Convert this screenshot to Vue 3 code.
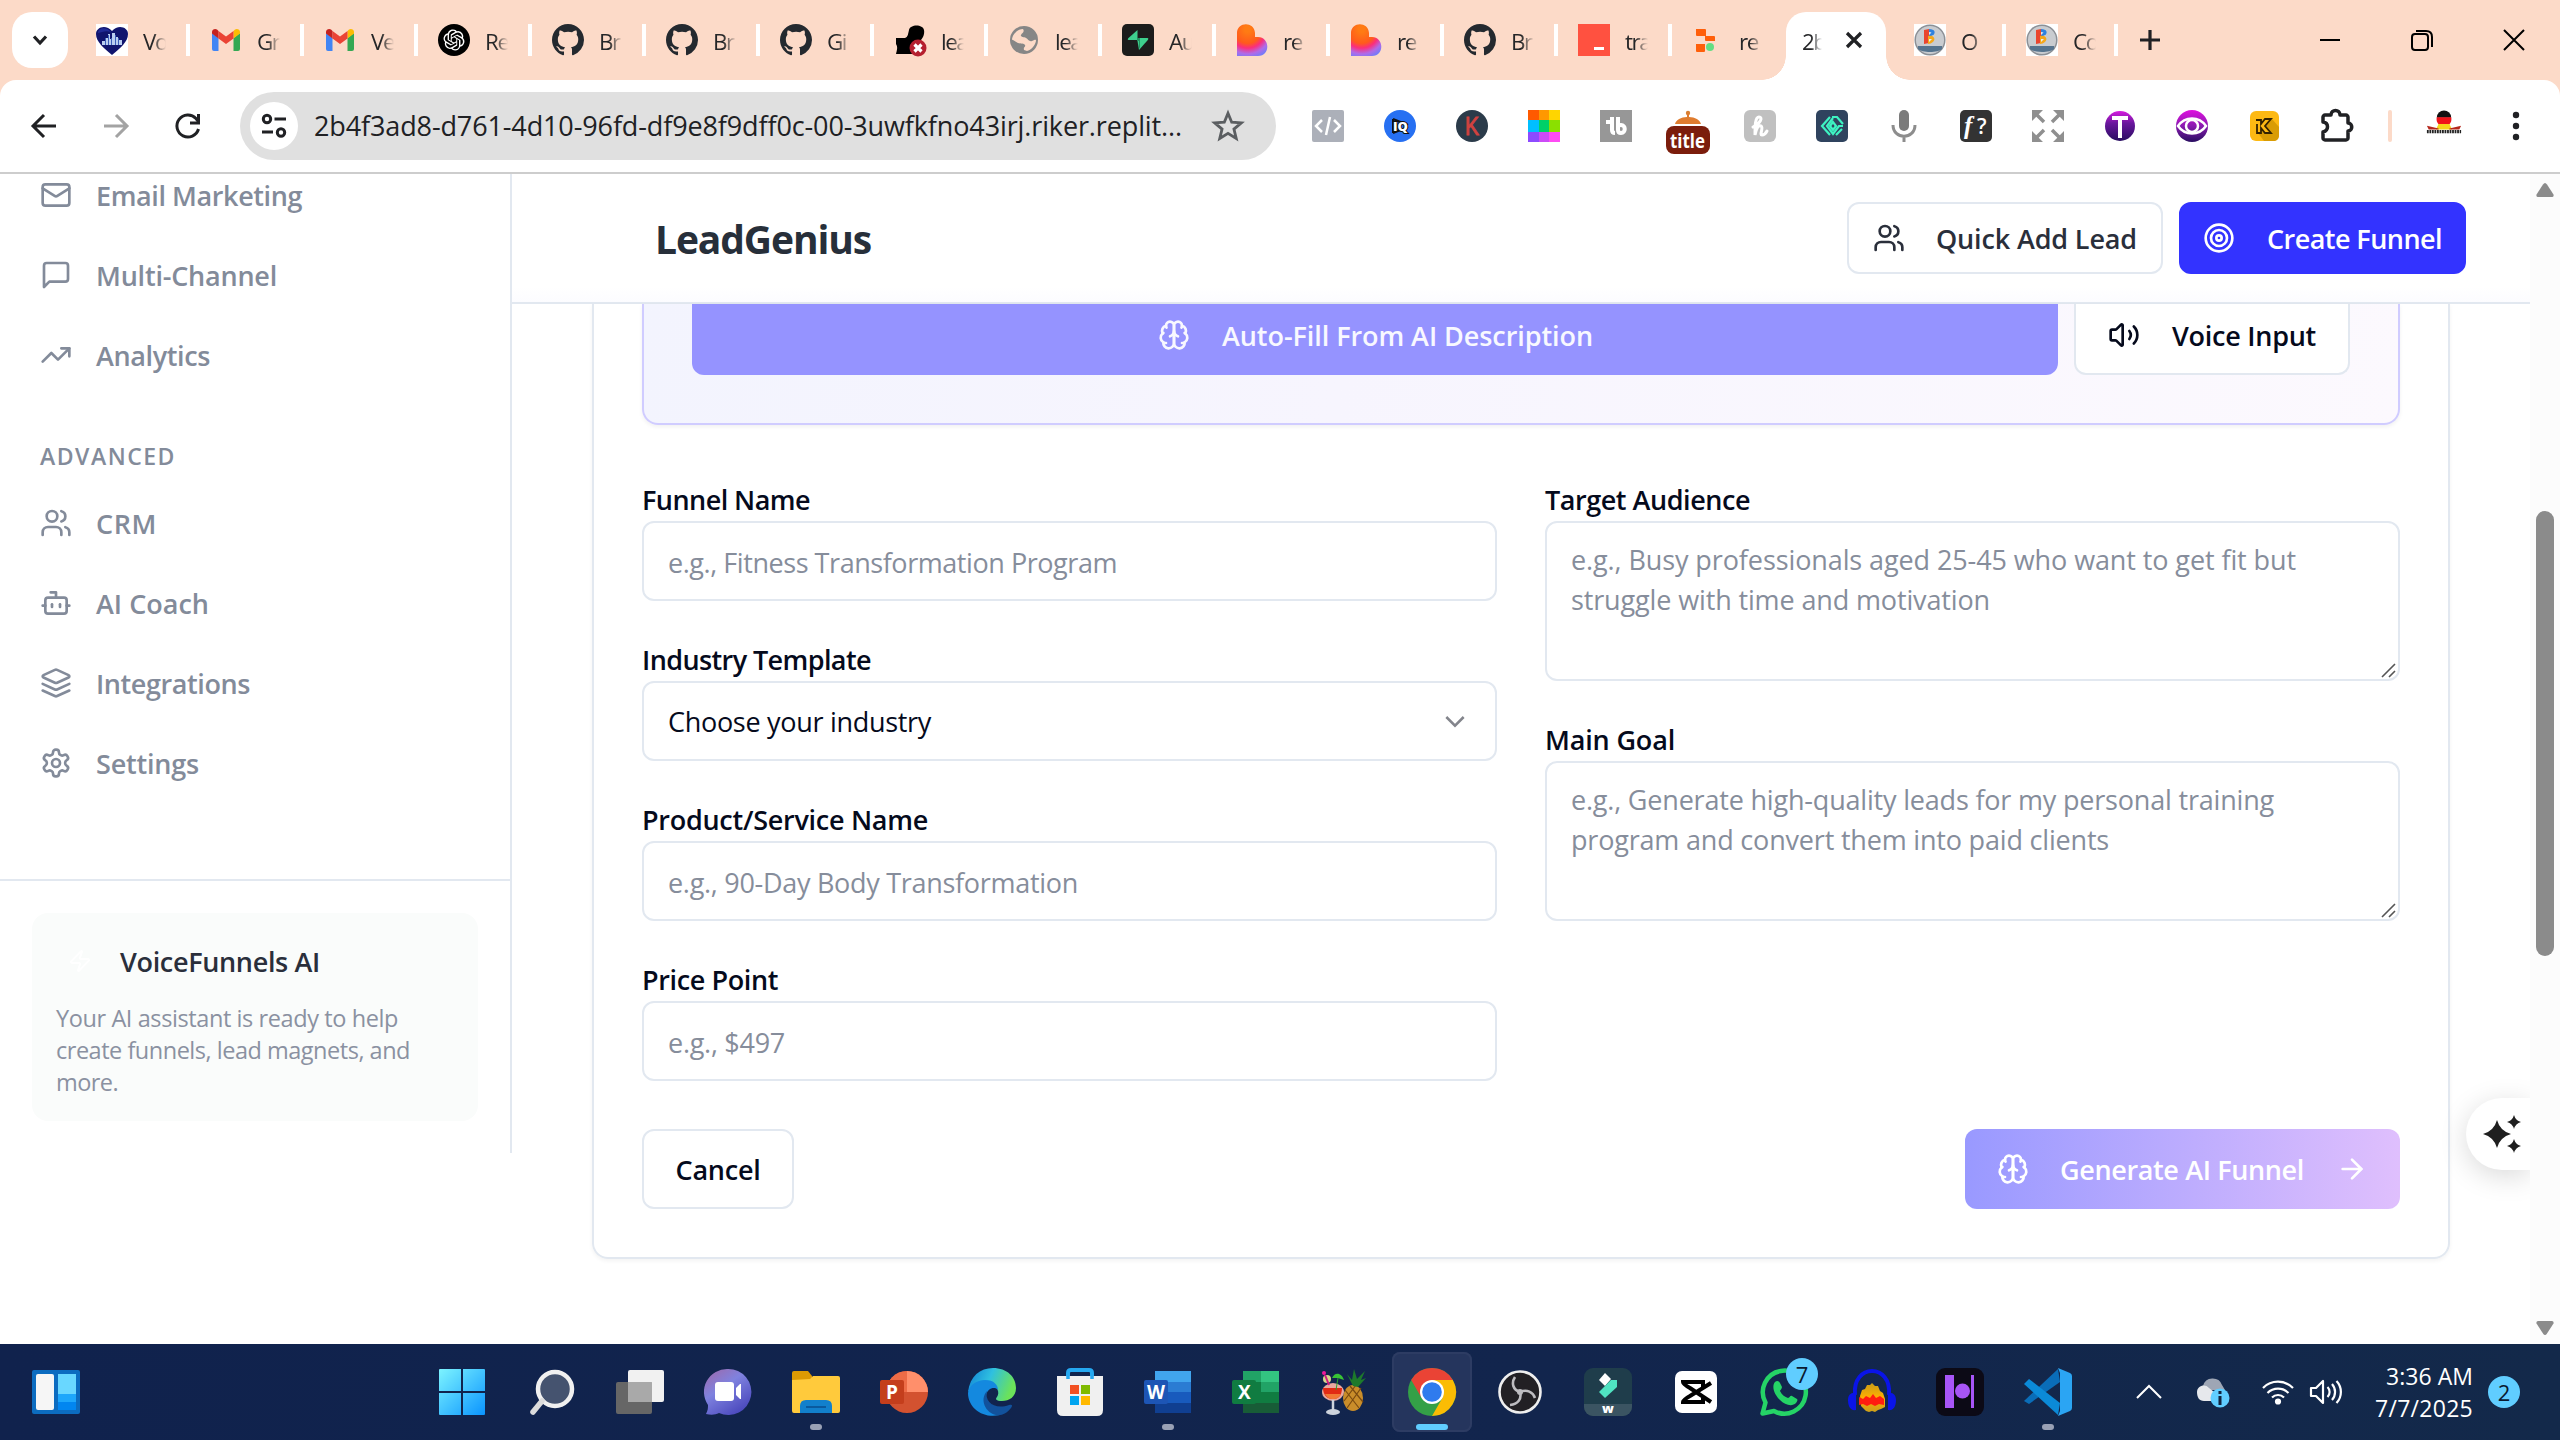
<script setup>
// Tunes letter-spacing so a single-line label takes the given width in pixels.
const vFit = {
  mounted(el, { value }) {
    const range = document.createRange()
    range.selectNodeContents(el)
    const w = range.getBoundingClientRect().width
    const n = el.textContent.trim().length
    if (n > 1) el.style.letterSpacing = ((value - w) / n).toFixed(3) + 'px'
  }
}

const lucide = {
  mail: ['M4 4h16a2 2 0 0 1 2 2v12a2 2 0 0 1-2 2H4a2 2 0 0 1-2-2V6a2 2 0 0 1 2-2z', 'm22 7-8.97 5.7a1.94 1.94 0 0 1-2.06 0L2 7'],
  message: ['M21 15a2 2 0 0 1-2 2H7l-4 4V5a2 2 0 0 1 2-2h14a2 2 0 0 1 2 2z'],
  trend: ['M22 7l-8.5 8.5-5-5L2 17', 'M16 7h6v6'],
  users: ['M16 21v-2a4 4 0 0 0-4-4H6a4 4 0 0 0-4 4v2', 'M5 7a4 4 0 1 0 8 0a4 4 0 1 0-8 0', 'M22 21v-2a4 4 0 0 0-3-3.87', 'M16 3.13a4 4 0 0 1 0 7.75'],
  bot: ['M12 8V4H8', 'M6 8h12a2 2 0 0 1 2 2v8a2 2 0 0 1-2 2H6a2 2 0 0 1-2-2v-8a2 2 0 0 1 2-2z', 'M2 14h2', 'M20 14h2', 'M15 13v2', 'M9 13v2'],
  layers: ['m12.83 2.18a2 2 0 0 0-1.66 0L2.6 6.08a1 1 0 0 0 0 1.83l8.58 3.91a2 2 0 0 0 1.66 0l8.58-3.9a1 1 0 0 0 0-1.83Z', 'm22 17.65-9.17 4.16a2 2 0 0 1-1.66 0L2 17.65', 'm22 12.65-9.17 4.16a2 2 0 0 1-1.66 0L2 12.65'],
  settings: ['M12.22 2h-.44a2 2 0 0 0-2 2v.18a2 2 0 0 1-1 1.73l-.43.25a2 2 0 0 1-2 0l-.15-.08a2 2 0 0 0-2.73.73l-.22.38a2 2 0 0 0 .73 2.73l.15.1a2 2 0 0 1 1 1.72v.51a2 2 0 0 1-1 1.74l-.15.09a2 2 0 0 0-.73 2.73l.22.38a2 2 0 0 0 2.73.73l.15-.08a2 2 0 0 1 2 0l.43.25a2 2 0 0 1 1 1.73V20a2 2 0 0 0 2 2h.44a2 2 0 0 0 2-2v-.18a2 2 0 0 1 1-1.73l.43-.25a2 2 0 0 1 2 0l.15.08a2 2 0 0 0 2.73-.73l.22-.39a2 2 0 0 0-.73-2.73l-.15-.08a2 2 0 0 1-1-1.74v-.5a2 2 0 0 1 1-1.74l.15-.09a2 2 0 0 0 .73-2.73l-.22-.38a2 2 0 0 0-2.73-.73l-.15.08a2 2 0 0 1-2 0l-.43-.25a2 2 0 0 1-1-1.73V4a2 2 0 0 0-2-2z', 'M9 12a3 3 0 1 0 6 0a3 3 0 1 0-6 0'],
  brain: ['M12 5a3 3 0 1 0-5.997.125 4 4 0 0 0-2.526 5.77 4 4 0 0 0 .556 6.588A4 4 0 1 0 12 18Z', 'M12 5a3 3 0 1 1 5.997.125 4 4 0 0 1 2.526 5.77 4 4 0 0 1-.556 6.588A4 4 0 1 1 12 18Z', 'M15 13a4.5 4.5 0 0 1-3-4 4.5 4.5 0 0 1-3 4', 'M17.599 6.5a3 3 0 0 0 .399-1.375', 'M6.003 5.125A3 3 0 0 0 6.401 6.5', 'M3.477 10.896a4 4 0 0 1 .585-.396', 'M19.938 10.5a4 4 0 0 1 .585.396', 'M6 18a4 4 0 0 1-1.967-.516', 'M19.967 17.484A4 4 0 0 1 18 18'],
  volume: ['M11 4.702a.705.705 0 0 0-1.203-.498L6.413 7.587A1.4 1.4 0 0 1 5.416 8H3a1 1 0 0 0-1 1v6a1 1 0 0 0 1 1h2.416a1.4 1.4 0 0 1 .997.413l3.383 3.384A.705.705 0 0 0 11 19.298z', 'M16 9a5 5 0 0 1 0 6', 'M19.364 18.364a9 9 0 0 0 0-12.728'],
  target: ['M2 12a10 10 0 1 0 20 0a10 10 0 1 0-20 0', 'M6 12a6 6 0 1 0 12 0a6 6 0 1 0-12 0', 'M10 12a2 2 0 1 0 4 0a2 2 0 1 0-4 0'],
  arrow: ['M5 12h14', 'm12 5 7 7-7 7'],
  zap: ['M4 14a1 1 0 0 1-.78-1.63l9.9-10.2a.5.5 0 0 1 .86.46l-1.92 6.02A1 1 0 0 0 13 10h7a1 1 0 0 1 .78 1.63l-9.9 10.2a.5.5 0 0 1-.86-.46l1.92-6.02A1 1 0 0 0 11 14z']
}

const gh = '<path transform="scale(2)" fill="#24292f" d="M8 0C3.58 0 0 3.58 0 8c0 3.54 2.29 6.53 5.47 7.59.4.07.55-.17.55-.38 0-.19-.01-.82-.01-1.49-2.01.37-2.53-.49-2.69-.94-.09-.23-.48-.94-.82-1.13-.28-.15-.68-.52-.01-.53.63-.01 1.08.58 1.23.82.72 1.21 1.87.87 2.33.66.07-.52.28-.87.51-1.07-1.78-.2-3.64-.89-3.64-3.95 0-.87.31-1.59.82-2.15-.08-.2-.36-1.02.08-2.12 0 0 .67-.21 2.2.82.64-.18 1.32-.27 2-.27s1.36.09 2 .27c1.53-1.04 2.2-.82 2.2-.82.44 1.1.16 1.92.08 2.12.51.56.82 1.27.82 2.15 0 3.07-1.87 3.75-3.65 3.95.29.25.54.73.54 1.48 0 1.07-.01 1.93-.01 2.2 0 .21.15.46.55.38A8.01 8.01 0 0 0 16 8c0-4.42-3.58-8-8-8z"/>'
const ui = 'font-family="Open Sans,Noto Sans,sans-serif"'

// 32 x 32 artwork: tab favicons and toolbar extensions
const art = {
  heart: '<path fill="#fff" d="M0 0h32v32H0z"/><path fill="#10146e" d="M16 31C8 24 0 18 0 10 0 3 10 0 16 7c6-7 16-4 16 3 0 8-8 14-16 21z"/><path fill="#2b39b0" opacity=".6" d="M2 9c0-5 8-7 13-1-5-2-9 0-13 1z"/><path fill="#b9cdf0" d="M6 17h3v-3h3v-4h2v5h2V9h3v4h3v3h4v5H6z"/><path stroke="#3a5cb8" d="M9.500 14v7M12.500 11v10M15.500 14v7M19.500 11v10M22.500 14v7"/>',
  gmail: '<path fill="#4285f4" d="M4 27h4.500V14L2 9v16a2 2 0 0 0 2 2z"/><path fill="#34a853" d="M23.500 27H28a2 2 0 0 0 2-2V9l-6.500 5z"/><path fill="#fbbc04" d="M23.500 7v7.500L30 9.500V8c0-2.600-3-4-5-2.500z"/><path fill="#ea4335" d="M8.500 14.500V7l7.500 5.600L23.500 7v7.500L16 20z"/><path fill="#c5221f" d="M2 8v1.500l6.500 5V7L7 5.500C5 4 2 5.400 2 8z"/>',
  openai: '<circle cx="16" cy="16" r="16"/><path fill="#fff" transform="translate(5.500 5.500) scale(.875)" d="M22.2819 9.8211a5.9847 5.9847 0 0 0-.5157-4.9108 6.0462 6.0462 0 0 0-6.5098-2.9A6.0651 6.0651 0 0 0 4.9807 4.1818a5.9847 5.9847 0 0 0-3.9977 2.9 6.0462 6.0462 0 0 0 .7427 7.0966 5.98 5.98 0 0 0 .511 4.9107 6.051 6.051 0 0 0 6.5146 2.9001A5.9847 5.9847 0 0 0 13.2599 24a6.0557 6.0557 0 0 0 5.7718-4.2058 5.9894 5.9894 0 0 0 3.9977-2.9001 6.0557 6.0557 0 0 0-.7475-7.0729zm-9.022 12.6081a4.4755 4.4755 0 0 1-2.8764-1.0408l.1419-.0804 4.7783-2.7582a.7948.7948 0 0 0 .3927-.6813v-6.7369l2.02 1.1686a.071.071 0 0 1 .038.052v5.5826a4.504 4.504 0 0 1-4.4945 4.4944zm-9.6607-4.1254a4.4708 4.4708 0 0 1-.5346-3.0137l.142.0852 4.783 2.7582a.7712.7712 0 0 0 .7806 0l5.8428-3.3685v2.3324a.0804.0804 0 0 1-.0332.0615L9.74 19.9502a4.4992 4.4992 0 0 1-6.1408-1.6464zM2.3408 7.8956a4.485 4.485 0 0 1 2.3655-1.9728V11.6a.7664.7664 0 0 0 .3879.6765l5.8144 3.3543-2.0201 1.1685a.0757.0757 0 0 1-.071 0l-4.8303-2.7865A4.504 4.504 0 0 1 2.3408 7.872zm16.5963 3.8558L13.1038 8.364 15.1192 7.2a.0757.0757 0 0 1 .071 0l4.8303 2.7913a4.4944 4.4944 0 0 1-.6765 8.1042v-5.6772a.79.79 0 0 0-.407-.667zm2.0107-3.0231l-.142-.0852-4.7735-2.7818a.7759.7759 0 0 0-.7854 0L9.409 9.2297V6.8974a.0662.0662 0 0 1 .0284-.0615l4.8303-2.7866a4.4992 4.4992 0 0 1 6.6802 4.66zM8.3065 12.863l-2.02-1.1638a.0804.0804 0 0 1-.038-.0567V6.0742a4.4992 4.4992 0 0 1 7.3757-3.4537l-.142.0805L8.704 5.459a.7948.7948 0 0 0-.3927.6813zm1.0976-2.3654l2.602-1.4998 2.6069 1.4998v2.9994l-2.5974 1.4997-2.6067-1.4997Z"/>',
  github: gh,
  fox: '<path d="M2 14h9c3-1 3-4 4-8 1-6 14-6 15 0 1 5-2 9-4 11l-8 13H2c1-4 2-7 0-10z"/><circle cx="24" cy="24" r="8.500" fill="#b51f2f"/><path stroke="#fff" stroke-width="3.200" d="m20.500 20.500 7 7m0-7-7 7"/>',
  globe: '<circle cx="16" cy="16" r="14" fill="#868686"/><path fill="#fcdac8" d="M15 5c2 3-1 4-2 6s3 2 5 3 3 4 6 3 4-2 4 0c-1 5-5 9-9 10l-3-1c-1-3 2-3 1-5s-4-1-7-2-5-4-6-3c0-5 5-11 11-11z"/><path fill="#868686" d="M17 4c4 1 8 4 9 9-3 1-4-2-6-2s-4-1-3-3 1-2 0-4z"/>',
  supabase: '<rect width="32" height="32" rx="5" fill="#1c1c1c"/><path fill="#3ecf8e" d="M15.500 6v10H6.500c-1 0-1-1 0-2z"/><path fill="#3ecf8e" d="M15 14h10.500c1 0 1 1.200.3 2L17 26z"/><path fill="#249361" d="M15 14h3v9l-1 2v-8h-2z"/>',
  lovable: '<defs><radialGradient id="lv" cx=".35" cy=".15" r="1"><stop offset=".1" stop-color="#ff7b13"/><stop offset=".45" stop-color="#ff5a1c"/><stop offset=".6" stop-color="#fb2e7c"/><stop offset=".78" stop-color="#b06ae8"/><stop offset="1" stop-color="#5b82ff"/></radialGradient></defs><path fill="url(#lv)" d="M1 9c0-11 17-12 18 0v4h3c12 0 13 19 0 19H1z"/>',
  red: '<path fill="#ff5140" d="M0 0h32v32H0z"/><path fill="#fff" d="M16 23h10v3H16z"/>',
  replit: '<path fill="#ff5f0a" d="M4 5h9a1 1 0 0 1 1 1v6H5a1 1 0 0 1-1-1zM13 12h9a1 1 0 0 1 1 1v4h-9a1 1 0 0 1-1-1zM4 20h9v7a1 1 0 0 1-1 1H5a1 1 0 0 1-1-1z"/><circle cx="18" cy="23" r="4" fill="#63dd83"/>',
  badge: '<path fill="#fff" d="M0 0h32v32H0z"/><circle cx="16" cy="16" r="14.800" fill="#c9ccd0" stroke="#8c9096" stroke-width="1.500"/><path fill="#e9452e" d="m10 6 5-1v14l-5 1z"/><path fill="#2e82e0" d="M15 5c6 0 7 4 4 6l-4 2z"/><path fill="#f5a81b" d="M14 12c8-2 9 7 0 8z"/><path fill="#e9edf0" d="m15 8 2.500.5L15 11zM15 15h3l-3 3z"/><path fill="#56748e" d="M4 22h24v3c-4 4-20 4-24 0z"/>',
  code: '<rect width="32" height="32" rx="2" fill="#acb0b9"/><path stroke="#fff" stroke-width="2.500" fill="none" d="m10 10-6 6 6 6m12-12 6 6-6 6M18 7l-4 18"/>',
  iq: `<circle cx="16" cy="16" r="16" fill="#2770f2"/><path fill="none" stroke="#111" stroke-width="2" d="M9 9v14M9 9l15 6M9 23l15-6"/><text x="9" y="21" font-size="13" font-weight="800" fill="#fff" stroke="#111" stroke-width="2" paint-order="stroke" ${ui}>IQ</text>`,
  k: `<circle cx="16" cy="16" r="16" fill="#2b3b4a"/><text x="9" y="25" font-size="25" fill="#d2423f" stroke="#d2423f" font-family="Liberation Sans" textLength="14" lengthAdjust="spacingAndGlyphs">K</text>`,
  rainbow: '<path fill="#ff5a00" d="M0 0h11v10H0z"/><path fill="#ff9800" d="M11 0h10v10H11z"/><path fill="#ffd500" d="M21 0h11v10H21z"/><path fill="#00bfff" d="M0 10h11v12H0z"/><path fill="#00d068" d="M11 10h10v12H11z"/><path fill="#8be000" d="M21 10h11v12H21z"/><path fill="#8d4bff" d="M0 22h11v10H0z"/><path fill="#cc4bf7" d="M11 22h10v10H11z"/><path fill="#ff4bf5" d="M21 22h11v10H21z"/>',
  tb: '<path fill="#979797" d="M0 0h32v32H0z"/><path fill="none" stroke="#fff" stroke-width="4" d="M6 12h5M12 7v13q0 3 3 3M18 7v13q0 3 3 3c5 0 5-8 0-8-2 0-3 1-3 2"/>',
  title: `<circle cx="16" cy="3" r="2.200" fill="#d98035"/><path fill="#df7c2f" d="M15 3h2v4c6 0 11 3 12 7H3c1-4 6-7 12-7z"/><rect x="-6" y="16" width="44" height="28" rx="8" fill="#7b1d0c"/><text x="-2" y="38" font-size="20" font-weight="700" fill="#fff" ${ui} textLength="35" lengthAdjust="spacingAndGlyphs">title</text>`,
  h: '<rect width="32" height="32" rx="6" fill="#c0c0c0"/><path fill="none" stroke="#fff" stroke-width="3" stroke-linecap="round" d="M9 17c8-4 10-10 6-10-4 0-4 9-4 18 1-6 3-10 6-9 3 2-2 9 1 9 2 0 4-2 5-4"/>',
  teal: '<rect width="32" height="32" rx="5" fill="#2f435e"/><path fill="none" stroke="#3ef3c2" stroke-width="2.200" d="M14 7 6 16l8 9M27 16h-4l-6 8-6-8 6-8M16 7l5 0 6 7M17 12l-3 4 3 4 3-4zM20 25l6-6"/>',
  mic: '<rect x="11" y="0" width="10" height="21" rx="5" fill="#7b7b7b"/><path fill="none" stroke="#8d8d8d" stroke-width="3" d="M5 15c0 15 22 15 22 0M16 26v6"/>',
  f: `<rect width="32" height="32" rx="5" fill="#333"/><text x="4" y="24" font-size="25" font-style="italic" font-weight="700" fill="#fff" font-family="Liberation Serif">f</text><text x="17" y="24" font-size="21" font-weight="600" fill="#fff" ${ui}>?</text>`,
  expand: '<path stroke="#8f8f8f" stroke-width="3.500" d="m3 3 9 9M29 3l-9 9M3 29l9-9m17 9-9-9"/><path fill="#8f8f8f" d="M0 0h11L0 11zM32 0v11L21 0zM0 32V21l11 11zM32 32H21l11-11z"/>',
  t: '<defs><linearGradient id="pt" x2="0" y2="1"><stop stop-color="#d81ce0"/><stop offset=".4" stop-color="#6a179e"/><stop offset="1" stop-color="#280d60"/></linearGradient></defs><circle cx="16" cy="16" r="15" fill="url(#pt)"/><path fill="#fff" d="M8 6h16v4h-6v18h-4V10H8z"/>',
  eye: '<defs><linearGradient id="pe" x2="0" y2="1"><stop stop-color="#e010e0"/><stop offset=".5" stop-color="#8a1bb0"/><stop offset="1" stop-color="#280d60"/></linearGradient></defs><circle cx="16" cy="16" r="16" fill="url(#pe)"/><path fill="none" stroke="#fff" stroke-width="2.500" d="M2 16c7-10 21-10 28 0-7 10-21 10-28 0z"/><circle cx="16" cy="16" r="6" fill="none" stroke="#fff" stroke-width="2.500"/>',
  yk: '<rect x="2" y="1" width="29" height="30" rx="6" fill="#fdb913"/><path fill="#d99c05" d="m10 23 14-14 7 8v8c0 4-2 6-6 6h-9z"/><path fill="#fdb913" stroke="#332200" stroke-width="1.800" d="M8 10h5v4l4-5h6l-6 7 6 7h-6l-4-5v5H9V14"/>',
  puzzle: '<path fill="none" stroke="#202124" stroke-width="3.500" stroke-linejoin="round" d="M5 5h6c0-6 9-6 9 0h6c1 0 2 1 2 2v6c5 0 5 8 0 8v7c0 1-1 2-2 2H5c-1 0-2-1-2-2v-6c6-2 6-9 0-10V7c0-1 1-2 2-2z"/>'
}

// 48 x 48 artwork: taskbar
const app = {
  start: '<defs><linearGradient id="ws" x2="1" y2="1"><stop stop-color="#7df4ff"/><stop offset="1" stop-color="#0a94ff"/></linearGradient></defs><path transform="translate(-2 0)" fill="url(#ws)" d="M1 2q0-1 1-1h21v22H1zM25 1h21q1 0 1 1v21H25zM1 25h22v22H2q-1 0-1-1zM25 25h22v21q0 1-1 1H25z"/>',
  search: '<circle cx="27" cy="21" r="17" fill="#45536f" stroke="#f0f0f0" stroke-width="4.500"/><path stroke="#dcdcdc" stroke-width="5.500" stroke-linecap="round" d="M14 33 5 44"/>',
  tasks: '<rect x="12" y="2" width="36" height="32" rx="2" fill="#f1f1f1"/><rect x="0" y="14" width="36" height="32" rx="2" fill="#666"/><path fill="#a9a9a9" d="M12 14h23q1 0 1 1v19H12z"/>',
  chat: '<defs><linearGradient id="ct" x2=".7" y2="1"><stop stop-color="#a067a6"/><stop offset=".45" stop-color="#7f82df"/><stop offset="1" stop-color="#4a48bd"/></linearGradient></defs><path fill="url(#ct)" d="M24 1a23 23 0 1 1-9 44c-4 2-8 2-13 1 2-4 2-6 2-9A23 23 0 0 1 24 1z"/><rect x="11" y="14" width="19" height="19" rx="3" fill="#fff"/><path fill="#fff" d="M32 20l4-4h1v15h-1l-4-4z"/>',
  folder: '<path fill="#dd9a03" d="M0 5q0-2 2-2h14l4 5v8H0z"/><path fill="#ffca3c" d="M0 12 18 11l3-3h25q2 0 2 2v33q0 2-2 2H2q-2 0-2-2z"/><path fill="#1280cc" d="M8 45V38q0-6 6-6h20q6 0 6 6v7z"/><path stroke="#0a5a9e" stroke-width="2" d="M14 39h20"/>',
  ppt: `<circle cx="27" cy="24" r="21" fill="#d35230"/><path fill="#ff8f6b" d="M27 3a21 21 0 0 1 21 21H27z"/><path fill="#ed6c47" d="M27 3v21H6A21 21 0 0 1 27 3z"/><rect y="12" width="24" height="24" rx="2" fill="#c43e1c"/><text x="6" y="31" font-size="19" font-weight="700" fill="#fff" ${ui}>P</text>`,
  edge: '<defs><linearGradient id="e1" x2="1" y2=".3"><stop stop-color="#0f7fd6"/><stop offset=".5" stop-color="#2fc0e0"/><stop offset="1" stop-color="#6be25a"/></linearGradient></defs><path fill="url(#e1)" d="M0 24C2 8 12 0 25 0c14 0 23 9 23 20 0 9-7 13-14 13-6 0-7-2-5-4 3-4 1-12-8-13-9 0-17 3-21 8z"/><path fill="#1489df" d="M0 25c1-8 9-13 17-13 9 0 13 5 13 10-3-4-11-2-12 6-1 9 5 18 14 19-17 4-32-7-32-22z"/><path fill="#12529c" d="M19 23c-3 11 8 19 22 14 3-1 4 0 2 3-4 5-9 8-15 7-10-2-17-15-9-24z"/>',
  store: '<path fill="none" stroke="#25a8f0" stroke-width="4" d="M12 12V5q0-3 3-3h18q3 0 3 3v7"/><path fill="#f0f0f0" d="M1 8h46v34q0 6-6 6H7q-6 0-6-6z"/><path fill="none" stroke="#25a8f0" stroke-width="3.500" d="M12 11V7m24 4V7"/><path fill="#f25022" d="M14 17h9v9h-9z"/><path fill="#7fba00" d="M25 17h9v9h-9z"/><path fill="#00a4ef" d="M14 28h9v9h-9z"/><path fill="#ffb900" d="M25 28h9v9h-9z"/>',
  word: `<path fill="#41a5ee" d="M11 3h36v11H11z"/><path fill="#2b7cd3" d="M11 14h36v10H11z"/><path fill="#185abd" d="M11 24h36v11H11z"/><path fill="#103f91" d="M11 35h36v10H11z"/><rect y="12" width="24" height="24" rx="2" fill="#1d55b5"/><text x="3" y="31" font-size="19" font-weight="700" fill="#fff" ${ui} textLength="18" lengthAdjust="spacingAndGlyphs">W</text>`,
  excel: `<path fill="#21a366" d="M11 3h18v11H11z"/><path fill="#33c481" d="M29 3h18v11H29z"/><path fill="#107c41" d="M11 14h18v21H11z"/><path fill="#21a366" d="M29 14h18v10H29z"/><path fill="#107c41" d="M29 24h18v11H29z"/><path fill="#185c37" d="M11 35h36v10H11z"/><rect y="12" width="24" height="24" rx="2" fill="#107c41"/><text x="6" y="31" font-size="19" font-weight="700" fill="#fff" ${ui}>X</text>`,
  drink: '<ellipse cx="33" cy="30" rx="10" ry="13" fill="#c98d2a"/><path stroke="#7a4a10" stroke-width="1.200" d="m25 22 14 18M30 18l13 16M41 20 27 40M36 17 24 33"/><path fill="#1d7a2b" d="M33 18 27 6l5 6 2-11 3 10 8-8-4 9 5-2-8 9z"/><ellipse cx="13" cy="24" rx="11" ry="9" fill="#e9a9a0"/><path fill="#e22b14" d="M3 20h19c0 8-4 11-9 11S3 28 3 20z"/><path fill="#f27a35" d="M5 26h16c-2 4-5 5-8 5s-6-1-8-5z"/><path stroke="#cdd3dc" stroke-width="2.500" d="M13 32v12"/><ellipse cx="13" cy="44" rx="7" ry="3" fill="#cdd3dc"/><circle cx="7" cy="11" r="4" fill="#d8d88a"/><circle cx="4" cy="5" r="2" fill="#f0189a"/><path stroke="#d01880" stroke-width="2" d="m5 7 4 10"/><path fill="#38c435" d="M12 10c3-7 10-5 12 2l-6-2z"/><path stroke="#2aa32a" d="m18 10-2 12"/>',
  chrome: '<circle cx="24" cy="24" r="24" fill="#34a047"/><path fill="#fbbc04" d="M24 12h20.800A24 24 0 0 1 24 48l10.400-18z"/><path fill="#ea4335" d="M3.200 12A24 24 0 0 1 44.800 12H24L13.600 30z"/><circle cx="24" cy="24" r="12" fill="#fff"/><circle cx="24" cy="24" r="9.800" fill="#2f7bee"/>',
  obs: '<circle cx="24" cy="24" r="20.500" fill="#222024" stroke="#eee" stroke-width="2.600"/><path fill="none" stroke="#bdbcc0" stroke-width="2.600" d="M19 9c-4 6-2 13 5 15M24 24c7-3 13 0 15 6M24 24c2 7-2 12-10 13"/><circle cx="24" cy="24" r="3" fill="#bdbcc0"/>',
  filmora: `<defs><clipPath id="fm"><rect width="48" height="48" rx="9"/></clipPath></defs><g clip-path="url(#fm)"><path fill="#1f3d4b" d="M0 0h48v48H0z"/><path fill="#3b5462" d="M0 36h48v12H0z"/></g><path fill="#fff" d="m21 5 6 6-6 7-6-6z"/><path fill="#50e3c2" d="M27 12h6v7L21 30l-6-6z"/><text x="18" y="45" font-size="13" font-weight="800" fill="#fff" ${ui}>w</text>`,
  capcut: '<rect x="3" y="3" width="42" height="42" rx="7" fill="#fff"/><path fill="none" stroke="#000" stroke-width="4" d="M39 15 18 28q-7 4-7 6h20v-6M39 34 18 20q-7-4-7-6h20v6"/>',
  whatsapp: '<path fill="none" stroke="#25d366" stroke-width="4.500" stroke-linejoin="round" d="m2.500 45.500 3-11A21.500 21.500 0 1 1 14 43z"/><path fill="#25d366" d="M15 14c2-2 4-1 5 1l2 4c0 2-2 3-2 4 2 4 5 6 8 7 2 0 2-3 4-2l5 3c1 1 0 3-1 4-4 4-11 2-16-3s-9-13-5-18z"/>',
  audacity: '<defs><linearGradient id="ad" x2="0" y2="1"><stop stop-color="#c79a18"/><stop offset=".5" stop-color="#ffb000"/><stop offset="1" stop-color="#cba01c"/></linearGradient></defs><path fill="none" stroke="#0a14e8" stroke-width="4" d="M7 27C4-5 44-5 41 27"/><path fill="#0a14e8" d="M0 32c0-5 3-8 8-7v17c-5 1-8-3-8-10zM48 32c0-5-3-8-8-7v17c5 1 8-3 8-10z"/><path fill="url(#ad)" d="M12 28l2-6 3-1 2-4 3 0 2-2 3 3 3 0 2 5 3 2 2 6v8l-4 2-3 1-3 2-3-1-3 1-3-1-3-3-2-2z"/><path fill="#ff1d10" d="M11 29l4 2 3-3 4 2 3-4 3 4 4-2 4 3v6l-5-1-4 2-4-2-4 2-4-2-4 1z"/>',
  hh: '<rect width="48" height="48" rx="9" fill="#0c0a16"/><path fill="#a855f7" d="M9 7h9v33H9zM35 7h3v33h-3z"/><circle cx="26.500" cy="23" r="7.500" fill="#a855f7"/>',
  vscode: '<path fill="#0a6db8" d="M0 33 34 1l2 13L5 36z"/><path fill="#0b8ad8" d="M0 16 5 11l31 24-2 12z"/><path fill="#2ba5f3" d="M34 0 46 5q2 1 2 3v32q0 2-2 3L34 48l2-5V5z"/>'
}

const tabs = [
  ['heart', 'Vo'], ['gmail', 'Gr'], ['gmail', 'Ve'], ['openai', 'Re'], ['github', 'Br'], ['github', 'Br'], ['github', 'Gi'],
  ['fox', 'lea'], ['globe', 'lea'], ['supabase', 'Au'], ['lovable', 're'], ['lovable', 're'], ['github', 'Br'], ['red', 'tra'], ['replit', 're']
]
const lastTabs = [['badge', 'O'], ['badge', 'Co']]
const exts = ['code', 'iq', 'k', 'rainbow', 'tb', 'title', 'h', 'teal', 'mic', 'f', 'expand', 't', 'eye', 'yk', 'puzzle']
const nav = [['mail', 'Email Marketing', 206], ['message', 'Multi-Channel', 181], ['trend', 'Analytics', 114]]
const navAdvanced = [['users', 'CRM', 61], ['bot', 'AI Coach', 113], ['layers', 'Integrations', 154], ['settings', 'Settings', 103]]
const leftFields = [
  { label: 'Funnel Name', lw: 168, text: 'e.g., Fitness Transformation Program', tw: 449 },
  { label: 'Industry Template', lw: 229, text: 'Choose your industry', tw: 263, select: true },
  { label: 'Product/Service Name', lw: 286, text: 'e.g., 90-Day Body Transformation', tw: 410 },
  { label: 'Price Point', lw: 136, text: 'e.g., $497', tw: 117 }
]
const rightFields = [
  { label: 'Target Audience', lw: 205, lines: [['e.g., Busy professionals aged 25-45 who want to get fit but', 725], ['struggle with time and motivation', 419]] },
  { label: 'Main Goal', lw: 130, lines: [['e.g., Generate high-quality leads for my personal training', 703], ['program and convert them into paid clients', 538]] }
]
const apps = [
  ['start'], ['search'], ['tasks'], ['chat'], ['folder', 'open'], ['ppt'], ['edge'], ['store'], ['word', 'open'], ['excel'], ['drink'],
  ['chrome', 'active'], ['obs'], ['filmora'], ['capcut'], ['whatsapp', '', '7'], ['audacity'], ['hh'], ['vscode', 'open']
]
</script>

<template>
  <div class="screen">
    <div class="tabstrip">
      <div class="tab-search">
        <svg width="20" height="20" viewBox="0 0 20 20"><path d="M4 6.500l6 6.500 6-6.500" fill="none" stroke="#202124" stroke-width="3.200" /></svg>
      </div>
      <div v-for="(t, i) in tabs" :key="i" class="tab" :class="{ last: i === tabs.length - 1 }">
        <svg class="fav" viewBox="0 0 32 32" v-html="art[t[0]]"></svg>
        <span class="tab-text">{{ t[1] }}</span>
      </div>
      <div class="tab-active">
        <span class="tab-text narrow">2b</span>
        <svg width="20" height="20" viewBox="0 0 20 20"><path d="M3 3l14 14M17 3L3 17" stroke="#202124" stroke-width="3.200" /></svg>
      </div>
      <div v-for="(t, i) in lastTabs" :key="'l' + i" class="tab late">
        <svg class="fav" viewBox="0 0 32 32" v-html="art[t[0]]"></svg>
        <span class="tab-text">{{ t[1] }}</span>
      </div>
      <svg class="plus" width="24" height="24" viewBox="0 0 24 24"><path d="M12 2v20M2 12h20" stroke="#202124" stroke-width="3.200" /></svg>
      <div class="win">
        <svg width="24" height="24" viewBox="0 0 24 24"><path d="M2 12h20" stroke="#000" stroke-width="2" /></svg>
        <svg width="24" height="24" viewBox="0 0 24 24" fill="none" stroke="#000" stroke-width="2"><rect x="2" y="6" width="16" height="16" rx="3" /><path d="M6 3h10q6 0 6 6v10" /></svg>
        <svg width="24" height="24" viewBox="0 0 24 24"><path d="M2 2l20 20M22 2L2 22" stroke="#000" stroke-width="2" /></svg>
      </div>
    </div>

    <div class="toolbar-back">
      <div class="toolbar">
        <svg class="tool" viewBox="0 0 32 32"><path d="M28 16H6M16 5L5 16l11 11" fill="none" stroke="#202124" stroke-width="3" /></svg>
        <svg class="tool" viewBox="0 0 32 32"><path d="M4 16h22M16 5l11 11-11 11" fill="none" stroke="#a3a3a3" stroke-width="3" /></svg>
        <svg class="tool" viewBox="0 0 32 32"><path d="M26.500 19A11 11 0 1 1 24 8.500l2 2.500" fill="none" stroke="#202124" stroke-width="3" /><path d="M26.500 4v9H18" fill="none" stroke="#202124" stroke-width="3" /></svg>
        <div class="omnibox">
          <div class="tune">
            <svg width="28" height="28" viewBox="0 0 28 28" fill="none" stroke="#202124" stroke-width="3"><circle cx="7" cy="7" r="3.700" /><path d="M14.500 7H26M2 20h11" /><circle cx="21" cy="20.500" r="3.700" /></svg>
          </div>
          <span class="url" v-fit="868">2b4f3ad8-d761-4d10-96fd-df9e8f9dff0c-00-3uwfkfno43irj.riker.replit...</span>
          <svg width="34" height="34" viewBox="0 0 24 24"><path d="M12 3l2.600 6.300 6.800.5-5.200 4.400 1.600 6.600L12 17.200l-5.800 3.600 1.600-6.600-5.200-4.400 6.800-.5z" fill="none" stroke="#5b5e61" stroke-width="2" /></svg>
        </div>
        <div class="exts">
          <svg v-for="e in exts" :key="e" class="ext" viewBox="0 0 32 32" v-html="art[e]"></svg>
        </div>
        <i class="divider"></i>
        <svg class="avatar" width="36" height="36" viewBox="0 0 40 40">
          <path fill="#111" d="M12 13a8 8 0 0 1 16 0z" /><path fill="#f0131a" d="M12 12.500h16c1 4-1 8-4 9h-8c-3-1-5-5-4-9z" /><path fill="#f6d51b" d="M14 20h12l3 6H11z" />
          <path fill="#b5271c" d="M1 22l13 3v1H3zM39 22l-13 3v1h11z" /><path d="M1 28.500h38" stroke="#222" stroke-width="3.500" stroke-dasharray="2 .8" />
        </svg>
        <svg class="dots" width="8" height="30" viewBox="0 0 8 30" fill="#202124"><circle cx="4" cy="4" r="3.200" /><circle cx="4" cy="15" r="3.200" /><circle cx="4" cy="26" r="3.200" /></svg>
      </div>
    </div>

    <div class="page">
      <div class="sidebar-col">
        <aside class="sidebar">
          <nav>
            <a v-for="n in nav" :key="n[1]"><svg class="lu s32" viewBox="0 0 24 24"><path v-for="p in lucide[n[0]]" :key="p" :d="p" /></svg><span v-fit="n[2]">{{ n[1] }}</span></a>
            <h3><span v-fit="136">ADVANCED</span></h3>
            <a v-for="n in navAdvanced" :key="n[1]"><svg class="lu s32" viewBox="0 0 24 24"><path v-for="p in lucide[n[0]]" :key="p" :d="p" /></svg><span v-fit="n[2]">{{ n[1] }}</span></a>
          </nav>
          <div class="assist-wrap">
            <div class="assist">
              <div class="assist-head">
                <span class="bolt"><svg class="lu" width="24" height="24" viewBox="0 0 24 24"><path :d="lucide.zap[0]" /></svg></span>
                <strong v-fit="200">VoiceFunnels AI</strong>
              </div>
              <p v-fit="342">Your AI assistant is ready to help</p>
              <p v-fit="354">create funnels, lead magnets, and</p>
              <p v-fit="62">more.</p>
            </div>
          </div>
        </aside>
      </div>

      <div class="content">
        <header>
          <h1 v-fit="216">LeadGenius</h1>
          <div class="actions">
            <button class="btn quick"><svg class="lu s32" viewBox="0 0 24 24"><path v-for="p in lucide.users" :key="p" :d="p" /></svg><span v-fit="201">Quick Add Lead</span></button>
            <button class="btn create"><svg class="lu s32" viewBox="0 0 24 24"><path v-for="p in lucide.target" :key="p" :d="p" /></svg><span v-fit="175">Create Funnel</span></button>
          </div>
        </header>
        <main>
          <section class="card">
            <div class="ai-panel">
              <button class="autofill"><svg class="lu s32" viewBox="0 0 24 24"><path v-for="p in lucide.brain" :key="p" :d="p" /></svg><span v-fit="371">Auto-Fill From AI Description</span></button>
              <button class="voice"><svg class="lu s32" viewBox="0 0 24 24"><path v-for="p in lucide.volume" :key="p" :d="p" /></svg><span v-fit="144">Voice Input</span></button>
            </div>
            <div class="form">
              <div class="col">
                <div v-for="f in leftFields" :key="f.label" class="field">
                  <label><span v-fit="f.lw">{{ f.label }}</span></label>
                  <div class="input" :class="{ select: f.select }">
                    <span v-fit="f.tw">{{ f.text }}</span>
                    <svg v-if="f.select" width="32" height="32" viewBox="0 0 24 24"><path d="m5.500 9 6.500 6.500L18.500 9" fill="none" stroke="#83858c" stroke-width="1.900" /></svg>
                  </div>
                </div>
              </div>
              <div class="col">
                <div v-for="f in rightFields" :key="f.label" class="field">
                  <label><span v-fit="f.lw">{{ f.label }}</span></label>
                  <div class="area">
                    <div v-for="l in f.lines" :key="l[0]"><span v-fit="l[1]">{{ l[0] }}</span></div>
                    <svg class="grip" width="16" height="16" viewBox="0 0 16 16"><path d="M1 15L14 2M8 15l6-6" stroke="#555" stroke-width="1.600" /></svg>
                  </div>
                </div>
              </div>
            </div>
            <div class="foot">
              <button class="btn cancel"><span v-fit="85">Cancel</span></button>
              <button class="generate"><svg class="lu s32" viewBox="0 0 24 24"><path v-for="p in lucide.brain" :key="p" :d="p" /></svg><span v-fit="244">Generate AI Funnel</span><svg class="lu s32 arrow" viewBox="0 0 24 24"><path v-for="p in lucide.arrow" :key="p" :d="p" /></svg></button>
            </div>
          </section>
        </main>
        <div class="sparkle">
          <svg width="40" height="40" viewBox="0 0 40 40" fill="#1f1f1f"><path d="M14 6q3 11 14 14-11 3-14 14Q11 23 0 20q11-3 14-14zM31 1q1.500 5.500 7 7-5.500 1.500-7 7-1.500-5.500-7-7 5.500-1.500 7-7zM31 25q1.500 5.500 7 7-5.500 1.500-7 7-1.500-5.500-7-7 5.500-1.500 7-7z" /></svg>
        </div>
      </div>

      <div class="scroll">
        <svg width="18" height="14" viewBox="0 0 18 14"><path d="M9 0q1 0 2 1.500l6.500 10Q18 14 16 14H2q-2 0-1.500-2.500L7 1.500Q8 0 9 0z" fill="#8b8b8b" /></svg>
        <i class="thumb"></i>
        <svg class="down" width="18" height="14" viewBox="0 0 18 14"><path d="M9 14q1 0 2-1.500l6.500-10Q18 0 16 0H2Q0 0 .5 2.500l6.500 10Q8 14 9 14z" fill="#8b8b8b" /></svg>
      </div>
    </div>

    <div class="taskbar">
      <svg class="widgets" width="48" height="48" viewBox="0 0 48 48">
        <rect y="2" width="48" height="44" rx="2" fill="#0c6cc0" /><rect x="4" y="6" width="18" height="36" rx="2" fill="#f6f6f6" />
        <path fill="#69d7ff" d="M26 6h18v20H26z" /><path fill="#1ea7fb" d="M26 26h18v8H26z" /><path fill="#0286f0" d="M26 34h18v8H26z" />
      </svg>
      <div class="apps">
        <div v-for="a in apps" :key="a[0]" class="app" :class="a[1]">
          <svg width="48" height="48" viewBox="0 0 48 48" v-html="app[a[0]]"></svg>
          <span v-if="a[2]" class="count">{{ a[2] }}</span>
        </div>
      </div>
      <div class="tray">
        <svg width="32" height="32" viewBox="0 0 32 32"><path d="M4 22L16 10l12 12" fill="none" stroke="#fff" stroke-width="2" /></svg>
        <svg class="cloud" width="34" height="32" viewBox="0 0 34 32"><path fill="#9ea6b5" d="M7 10a10 10 0 0 1 19-1l3 5H7z" /><path fill="#e6e8ec" d="M1 16c0-6 8-9 12-4l9 7v6H8c-5 0-7-4-7-9z" /><circle cx="24" cy="22" r="9.500" fill="#60cdff" /><path fill="#10233f" d="M22.500 15h3v3h-3zM22.500 20h3v9h-3z" /></svg>
        <svg class="wifi" width="34" height="32" viewBox="0 0 34 32" fill="none" stroke="#fff" stroke-width="2.200"><path d="M2 12a21 21 0 0 1 30 0M6.500 17a15 15 0 0 1 21 0M11 21.500a8.500 8.500 0 0 1 12 0" /><circle cx="17" cy="25.500" r="2" fill="#fff" /></svg>
        <svg class="spk" width="34" height="32" viewBox="0 0 34 32" fill="none" stroke="#fff" stroke-width="2.200" stroke-linejoin="round"><path d="M2 12h5l7-7v22l-7-7H2zM18.500 11a7 7 0 0 1 0 10M23 8a12 12 0 0 1 0 16M27.500 5a16 16 0 0 1 0 22" /></svg>
        <div class="clock"><span v-fit="87">3:36 AM</span><span v-fit="98">7/7/2025</span></div>
        <span class="notif">2</span>
      </div>
    </div>
  </div>
</template>

<style>
body { margin: 0; overflow: hidden; }
</style>

<style scoped>
.screen { width: 2560px; height: 1440px; display: flex; flex-direction: column; overflow: hidden; background: #fff; font-family: "Open Sans", "Noto Sans", sans-serif; font-size: 27px; }
.screen * { box-sizing: border-box; }
svg { display: block; flex: none; overflow: visible; }
span, h1, p, strong { white-space: nowrap; }
button { font: inherit; font-weight: 600; border: 0; padding: 0; margin: 0; background: none; display: flex; align-items: center; line-height: 40px; }
button span { padding-top: 2px; }
.lu { fill: none; stroke: currentColor; stroke-width: 2; stroke-linecap: round; stroke-linejoin: round; }
.s32 { width: 32px; height: 32px; }

/* tab strip */
.tabstrip { height: 80px; background: #fcdac8; display: flex; align-items: center; flex: none; }
.tab-search { width: 56px; height: 56px; margin: 0 6px 0 12px; border-radius: 20px; background: #fff; display: flex; align-items: center; justify-content: center; }
.tab { width: 114px; height: 32px; padding-left: 22px; display: flex; align-items: center; flex: none; border-right: 2px solid #fff; position: relative; }
.tab::after { content: ''; width: 2px; height: 32px; background: #fff; position: absolute; right: -4px; top: 0; }
.tab.last, .tab.last::after { border-color: transparent; background: transparent; }
.fav { width: 32px; height: 32px; }
.tab-text { margin-left: 15px; width: 23px; overflow: hidden; font-size: 22.500px; letter-spacing: -1.500px; line-height: 32px; color: #252628; padding-top: 3px; -webkit-mask-image: linear-gradient(90deg, #000 45%, transparent); mask-image: linear-gradient(90deg, #000 45%, transparent); }
.tab-active { width: 100px; height: 68px; margin: 12px 0 0 2px; background: #fff; border-radius: 20px 20px 0 0; display: flex; align-items: center; flex: none; position: relative; padding-bottom: 12px; }
.tab-active::before, .tab-active::after { content: ''; position: absolute; bottom: 0; width: 24px; height: 24px; }
.tab-active::before { left: -24px; background: radial-gradient(circle at 0 0, transparent 23.5px, #fff 24px); }
.tab-active::after { right: -24px; background: radial-gradient(circle at 100% 0, transparent 23.5px, #fff 24px); }
.tab-text.narrow { margin-left: 16px; width: 20px; margin-right: 22px; }
.tab-active + .tab { margin-left: 6px; }
.tab.late { width: 112px; }
.plus { margin-left: 22px; }
.win { margin-left: auto; display: flex; gap: 68px; padding-right: 34px; }

/* toolbar */
.toolbar-back { background: linear-gradient(#fcdac8 50%, #fff 50%); flex: none; }
.toolbar { height: 94px; background: #fff; border-radius: 16px 16px 0 0; border-bottom: 2px solid #cdcdcd; display: flex; align-items: center; padding-left: 28px; }
.tool { width: 32px; height: 32px; margin-right: 40px; }
.omnibox { width: 1036px; height: 68px; border-radius: 34px; background: #e0e0e0; margin-left: -4px; display: flex; align-items: center; flex: none; }
.tune { width: 48px; height: 48px; border-radius: 50%; background: #fff; margin: 0 16px 0 10px; display: flex; align-items: center; justify-content: center; }
.url { width: 880px; color: #202124; line-height: 40px; margin-right: 17px; }
.exts { display: flex; margin-left: 36px; gap: 40px; }
.ext { width: 32px; height: 32px; }
.divider { width: 4px; height: 32px; background: #fcdac8; border-radius: 2px; margin-left: 36px; }
.avatar { margin-left: 34px; margin-bottom: 4px; }
.dots { margin-left: 50px; }

/* page */
.page { height: 1170px; display: flex; flex: none; }
.sidebar-col { width: 512px; flex: none; }
.sidebar { height: 979px; border-right: 2px solid #e2e8f0; color: #838b9a; display: flex; flex-direction: column; }
nav { height: 705px; padding: 1px 0 0 40px; font-weight: 600; }
nav a { display: flex; align-items: center; height: 40px; margin-bottom: 40px; }
nav a span { margin-left: 24px; line-height: 40px; padding-top: 2px; }
nav h3 { margin: 60px 0 27px; padding-top: 1px; font-size: 23px; line-height: 40px; height: 41px; font-weight: 600; }
.assist-wrap { border-top: 2px solid #e2e8f0; padding: 32px 32px 0; }
.assist { width: 446px; height: 208px; border-radius: 16px; background: #fafcfb; padding: 24px; color: #8a91a1; font-size: 23.500px; }
.assist-head { display: flex; align-items: center; height: 48px; margin-bottom: 17px; }
.bolt { width: 48px; height: 48px; display: flex; align-items: center; justify-content: center; color: #fff; }
.assist strong { margin-left: 16px; font-size: 27px; font-weight: 600; color: #2a2f3b; }
.assist p { margin: 0; line-height: 32px; }

.content { width: 2018px; flex: none; position: relative; }
header { height: 130px; border-bottom: 2px solid #e2e8f0; display: flex; align-items: center; justify-content: space-between; padding: 0 64px 0 143px; background: linear-gradient(#fff 88%, #fcfcff); }
h1 { margin: 0; padding-top: 2px; font-size: 39px; font-weight: 700; color: #272f3a; line-height: 56px; }
.actions { display: flex; gap: 16px; }
.btn { border: 2px solid #e2e8f0; border-radius: 12px; background: #fff; }
.quick { width: 316px; height: 72px; padding-left: 24px; color: #2a2f3b; }
.quick span { margin-left: 31px; }
.create { width: 287px; height: 72px; background: #3333ff; border-color: #3333ff; color: #fff; padding-left: 22px; }
.create span { margin-left: 32px; }

main { padding-left: 80px; }
.card { width: 1858px; height: 955px; border: 2px solid #e2e8f0; border-top: 0; border-radius: 0 0 16px 16px; box-shadow: 0 2px 4px rgba(0, 0, 0, .05); padding: 0 48px; }
.ai-panel { width: 1758px; height: 121px; border: 2px solid #d0ccff; border-top: 0; border-radius: 0 0 16px 16px; background: linear-gradient(100deg, #f3f4fe, #f7f5fe 40%, #fcf9fe); box-shadow: 0 2px 4px rgba(0, 0, 0, .06); padding: 0 48px; display: flex; gap: 16px; align-items: flex-start; }
.autofill { width: 1366px; height: 71px; background: #9593ff; border-radius: 0 0 12px 12px; color: #f8f8ff; padding-left: 466px; padding-bottom: 9px; }
.voice { width: 276px; height: 71px; background: #fff; border: 2px solid #e2e8f0; border-top: 0; border-radius: 0 0 12px 12px; color: #050a1c; padding-left: 32px; padding-bottom: 7px; }
.autofill span, .voice span { margin-left: 32px; }
.form { display: flex; justify-content: space-between; width: 1758px; padding-top: 56px; height: 704px; }
.col { width: 855px; }
.field { margin-bottom: 40px; }
label { display: block; height: 40px; line-height: 38px; font-weight: 600; color: #050a1c; }
.input { height: 80px; border: 2px solid #e2e8f0; border-radius: 12px; padding: 3px 24px 0; display: flex; align-items: center; justify-content: space-between; color: #868d9b; }
.input.select { color: #050a1c; padding: 0 24px 0; }
.area { height: 160px; border: 2px solid #e2e8f0; border-radius: 12px; padding: 17px 24px 0; line-height: 40px; color: #868d9b; position: relative; }
.grip { position: absolute; right: 1px; bottom: 1px; }
.foot { display: flex; justify-content: space-between; width: 1758px; }
.cancel { width: 152px; height: 80px; color: #050a1c; justify-content: center; }
.generate { width: 435px; height: 80px; border-radius: 12px; color: #fff; background: linear-gradient(90deg, #9999ff, #dfbffd); padding-left: 32px; }
.generate span { margin-left: 31px; width: 244px; }
.arrow { margin-left: 32px; }
.sparkle { position: absolute; right: 0; top: 924px; width: 64px; height: 72px; border-radius: 36px 0 0 36px; background: #fff; box-shadow: 0 6px 28px rgba(0, 0, 0, .15); display: flex; align-items: center; padding-left: 17px; clip-path: inset(-60px 0 -60px -60px); }

.scroll { width: 30px; background: #fcfcfc; display: flex; flex-direction: column; align-items: center; padding-top: 9px; }
.thumb { width: 18px; height: 445px; border-radius: 9px; background: #8b8b8b; margin-top: 314px; }
.down { margin-top: 365px; }

/* taskbar */
.taskbar { height: 96px; background: linear-gradient(90deg, #10224d, #12254d 60%, #13294a); display: flex; align-items: center; flex: none; }
.widgets { margin-left: 32px; }
.apps { display: flex; gap: 8px; margin-left: 344px; flex: none; }
.app { width: 80px; height: 80px; border-radius: 8px; display: flex; align-items: center; justify-content: center; position: relative; }
.app.active { background: #25355d; box-shadow: inset 0 0 0 2px #2d3c63; }
.app.open::after, .app.active::after { content: ''; position: absolute; left: 34px; bottom: 2px; width: 12px; height: 6px; border-radius: 3px; background: #99a1b5; }
.app.active::after { left: 24px; width: 32px; background: #60cdff; }
.count { position: absolute; left: 42px; top: 6px; width: 32px; height: 32px; border-radius: 50%; background: #60cdff; color: #0a1a30; font-size: 22px; line-height: 32px; text-align: center; }
.tray { margin-left: auto; display: flex; align-items: center; padding-right: 40px; color: #fff; flex: none; }
.cloud { margin-left: 31px; }
.wifi { margin-left: 31px; }
.spk { margin-left: 14px; }
.clock { width: 130px; display: flex; flex-direction: column; align-items: flex-end; font-size: 23px; line-height: 32px; }
.notif { margin-left: 15px; width: 32px; height: 32px; border-radius: 50%; background: #60cdff; color: #0a1a30; font-size: 22px; line-height: 32px; text-align: center; }
</style>
